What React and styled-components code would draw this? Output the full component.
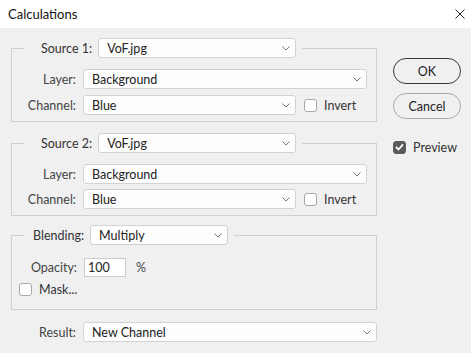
import React from "react";
import styled, { createGlobalStyle } from "styled-components";

const GlobalStyle = createGlobalStyle`
  html, body {
    margin: 0;
    padding: 0;
    background: #f0f0f0;
  }
  body {
    font-family: Lato, "Noto Sans", sans-serif;
    font-size: 12.5px;
    color: #333;
  }
`;

const Window = styled.div`
  width: 471px;
  height: 353px;
  background: #f0f0f0;
  overflow: hidden;
`;

const TitleBar = styled.div`
  height: 28px;
  background: #fff;
  display: flex;
  align-items: center;
  justify-content: space-between;
  padding: 0 6px 0 8px;
  box-sizing: border-box;
  font-size: 13px;
  color: #111;
`;

const Body = styled.div`
  display: flex;
  padding: 10px 0 0 11px;
`;

const LeftCol = styled.div`
  width: 366px;
  display: flex;
  flex-direction: column;
`;

const RightCol = styled.div`
  margin-left: 16px;
  padding-top: 20px;
  display: flex;
  flex-direction: column;
  width: 68px;
`;

const Group = styled.fieldset`
  margin: ${(p) => p.$top || 0}px 0 0 0;
  padding: ${(p) => p.$pad || "11px 8px 6px 0"};
  border: 1px solid #cfcfcf;
  min-inline-size: 0;
  display: flex;
  flex-direction: column;
  gap: ${(p) => p.$gap ?? 5}px;
`;

const Legend = styled.legend`
  margin-left: 12px;
  padding: 0 6px 0 ${(p) => p.$indent}px;
  display: flex;
  align-items: center;
  gap: 6px;
`;

const Row = styled.div`
  display: flex;
  align-items: center;
  height: 20px;
`;

const Label = styled.span`
  width: ${(p) => p.$w || 64}px;
  text-align: right;
  margin-right: 7px;
  color: #444;
  white-space: nowrap;
`;

const LegendLabel = styled.span`
  color: #333;
  white-space: nowrap;
`;

const SelectBox = styled.div`
  width: ${(p) => p.$w}px;
  height: 20px;
  box-sizing: border-box;
  background: #fdfdfd;
  border: 1px solid #d2d2d2;
  border-radius: 3px;
  display: flex;
  align-items: center;
  justify-content: space-between;
  padding: 0 5px 0 8px;
  color: #222;
`;

const Chevron = () => (
  <svg width="8" height="5" viewBox="0 0 8 5">
    <path d="M0.5 0.5 L4 4 L7.5 0.5" fill="none" stroke="#777" strokeWidth="1" />
  </svg>
);

const Select = ({ w, children }) => (
  <SelectBox $w={w}>
    <span>{children}</span>
    <Chevron />
  </SelectBox>
);

const Check = styled.span`
  width: 13px;
  height: 13px;
  box-sizing: border-box;
  border: 1px solid ${(p) => (p.$on ? "#5a5a5a" : "#a8a8a8")};
  background: ${(p) => (p.$on ? "#5a5a5a" : "#fff")};
  border-radius: 3px;
  display: inline-flex;
  align-items: center;
  justify-content: center;
  flex-shrink: 0;
`;

const CheckLine = styled.label`
  display: flex;
  align-items: center;
  gap: 7px;
  margin-left: ${(p) => p.$left || 0}px;
  color: #333;
`;

const Checkbox = ({ on, left, children }) => (
  <CheckLine $left={left}>
    <Check $on={on}>
      {on && (
        <svg width="9" height="8" viewBox="0 0 9 8">
          <path d="M1 4 L3.5 6.5 L8 1.3" fill="none" stroke="#fff" strokeWidth="1.8" />
        </svg>
      )}
    </Check>
    {children}
  </CheckLine>
);

const NumInput = styled.div`
  width: 42px;
  height: 19px;
  box-sizing: border-box;
  border: 1px solid #cbcbcb;
  background: #fff;
  padding-left: 3px;
  display: flex;
  align-items: center;
  color: #222;
`;

const Unit = styled.span`
  margin-left: 10px;
  color: #444;
`;

const Button = styled.button`
  height: 26px;
  width: 68px;
  border-radius: 13px;
  border: 1px solid ${(p) => (p.$primary ? "#3a3a3a" : "#a9a9a9")};
  background: #f0f0f0;
  font-family: inherit;
  font-size: 12.5px;
  color: #222;
  padding: 0;
  margin-bottom: 9px;
`;

const ResultRow = styled(Row)`
  margin-top: 12px;
`;

const PreviewRow = styled(Row)`
  margin-top: 9px;
`;

const CloseIcon = () => (
  <svg width="10" height="10" viewBox="0 0 10 10">
    <path d="M0.5 0.5 L9.5 9.5 M9.5 0.5 L0.5 9.5" stroke="#222" strokeWidth="1" />
  </svg>
);

const SourceGroup = ({ n, top, gap }) => (
  <Group $top={top} $gap={gap}>
    <Legend $indent={17}>
      <LegendLabel>Source {n}:</LegendLabel>
      <Select w={198}>VoF.jpg</Select>
    </Legend>
    <Row>
      <Label>Layer:</Label>
      <Select w={284}>Background</Select>
    </Row>
    <Row>
      <Label>Channel:</Label>
      <Select w={213}>Blue</Select>
      <Checkbox on={false} left={8}>Invert</Checkbox>
    </Row>
  </Group>
);

export default function App() {
  return (
    <Window>
      <GlobalStyle />
      <TitleBar>
        <span>Calculations</span>
        <CloseIcon />
      </TitleBar>
      <Body>
        <LeftCol>
          <SourceGroup n={1} top={0} gap={6} />
          <SourceGroup n={2} top={11} gap={5} />
          <Group $top={9} $pad="12px 8px 10px 0" $gap={2}>
            <Legend $indent={9}>
              <LegendLabel>Blending:</LegendLabel>
              <Select w={138}>Multiply</Select>
            </Legend>
            <Row>
              <Label $w={65}>Opacity:</Label>
              <NumInput>100</NumInput>
              <Unit>%</Unit>
            </Row>
            <Row>
              <Checkbox on={false} left={7}>Mask...</Checkbox>
            </Row>
          </Group>
          <ResultRow>
            <Label $w={65}>Result:</Label>
            <Select w={294}>New Channel</Select>
          </ResultRow>
        </LeftCol>
        <RightCol>
          <Button $primary>OK</Button>
          <Button>Cancel</Button>
          <PreviewRow>
            <Checkbox on>Preview</Checkbox>
          </PreviewRow>
        </RightCol>
      </Body>
    </Window>
  );
}
